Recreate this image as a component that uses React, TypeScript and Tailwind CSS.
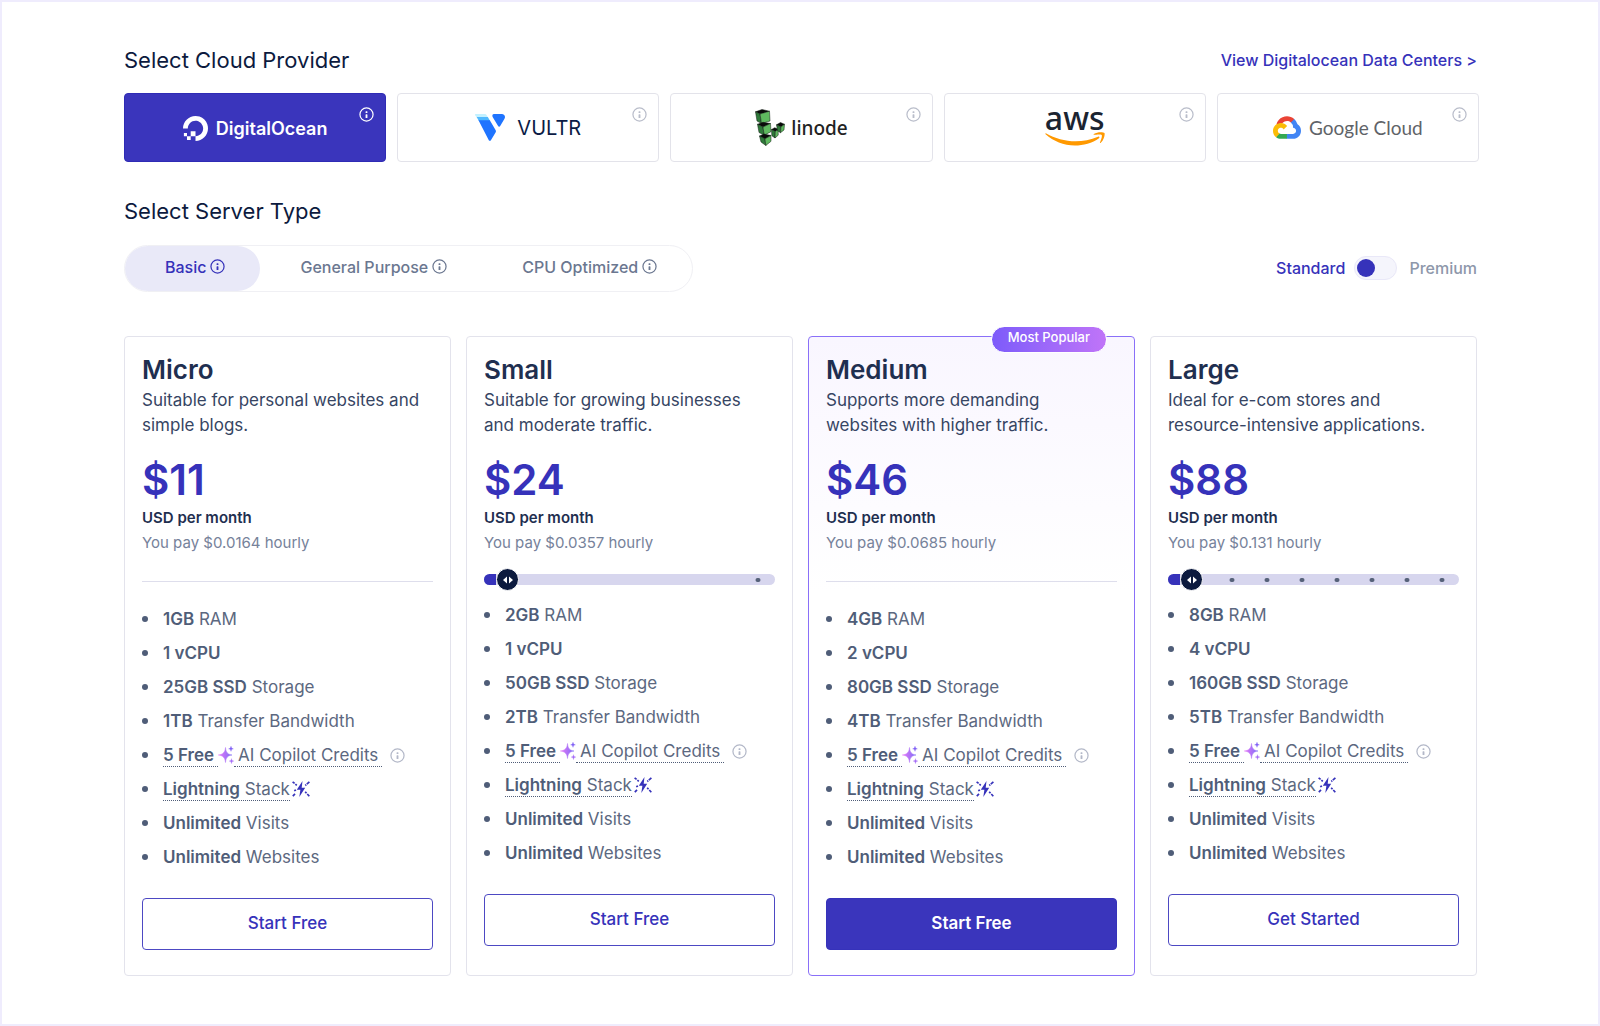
import React, { useState } from 'react';
import { SiDigitalocean } from 'react-icons/si';

type Plan = {
  name: string;
  description: string;
  price: string;
  hourly: string;
  ram: string;
  cpu: string;
  storage: string;
  transfer: string;
  cta: string;
  steps?: number[];
  popular?: boolean;
};

const plans: Plan[] = [
  {
    name: 'Micro',
    description: 'Suitable for personal websites and simple blogs.',
    price: '$11',
    hourly: '$0.0164',
    ram: '1GB',
    cpu: '1 vCPU',
    storage: '25GB SSD',
    transfer: '1TB',
    cta: 'Start Free',
  },
  {
    name: 'Small',
    description: 'Suitable for growing businesses and moderate traffic.',
    price: '$24',
    hourly: '$0.0357',
    ram: '2GB',
    cpu: '1 vCPU',
    storage: '50GB SSD',
    transfer: '2TB',
    cta: 'Start Free',
    steps: [94],
  },
  {
    name: 'Medium',
    description: 'Supports more demanding websites with higher traffic.',
    price: '$46',
    hourly: '$0.0685',
    ram: '4GB',
    cpu: '2 vCPU',
    storage: '80GB SSD',
    transfer: '4TB',
    cta: 'Start Free',
    popular: true,
  },
  {
    name: 'Large',
    description: 'Ideal for e-com stores and resource-intensive applications.',
    price: '$88',
    hourly: '$0.131',
    ram: '8GB',
    cpu: '4 vCPU',
    storage: '160GB SSD',
    transfer: '5TB',
    cta: 'Get Started',
    steps: [22, 34, 46, 58, 70, 82, 94],
  },
];

function InfoIcon({ className }: { className?: string }) {
  return (
    <svg viewBox="0 0 16 16" fill="none" className={`size-[15px] shrink-0 ${className ?? ''}`} aria-hidden="true">
      <circle cx="8" cy="8" r="7" stroke="currentColor" strokeWidth="1.3" />
      <rect x="7" y="4.5" width="2" height="2" rx="0.6" fill="currentColor" />
      <rect x="7" y="7.8" width="2" height="3.9" rx="0.6" fill="currentColor" />
    </svg>
  );
}

function DigitalOceanLogo() {
  return (
    <span className="flex items-center gap-2 pt-0.5 text-white">
      <SiDigitalocean className="size-[25px]" />
      <span className="text-[18px] leading-6 font-semibold">DigitalOcean</span>
    </span>
  );
}

function VultrLogo() {
  return (
    <span className="flex items-center gap-3 text-[#0b1b45]">
      <svg viewBox="0 0 30 27" className="h-[27px] w-[30px]" aria-hidden="true">
        <path d="M.8 0h9.200a1.800 1.800 0 0 1 1.500.9L13.400 4H2.400L.1 1.300A.9.9 0 0 1 .8 0z" fill="#c3f1ff" />
        <path d="M1.600 3h11.200l2.400 4H3.900z" fill="#51b9ff" />
        <path d="M3.500 6.300h11.300l5.900 9.900a2 2 0 0 1 0 2l-4.800 8a1.200 1.200 0 0 1-2.100 0z" fill="#1f74ff" />
        <path d="M18.800 0h8c2.600 0 4 2.600 2.700 4.700l-4.300 7.400a1.200 1.200 0 0 1-2.100 0L17.800 3.200C16.900 1.700 17.500 0 18.800 0z" fill="#1f74ff" />
      </svg>
      <span className="text-xl leading-6">VULTR</span>
    </span>
  );
}

function LinodeLogo() {
  return (
    <span className="flex items-center gap-1.5 text-[#222222]">
      <svg viewBox="0 0 30 37" className="h-[37px] w-[30px]" aria-hidden="true">
        <g stroke="#0f1a10" strokeWidth="0.5" strokeLinejoin="round">
          <path d="M0.500 2.800 7 0.500l7.500 1.700L5 5z" fill="#0a0a0a" />
          <path d="M0.500 2.800 5 5l1.500 9.500L2 12z" fill="#2f7a3a" />
          <path d="M5 5l9.500-2.800.5 9.800-8.500 2.500z" fill="#5fb95f" />
          <path d="M2.500 15.300 8 13.300l7.500 1.200L8 18z" fill="#0a0a0a" />
          <path d="M2.500 15.300 8 18l1.200 8.200L4 23.500z" fill="#2f7a3a" />
          <path d="M8 18l7.500-3.500.5 8.200-6.800 3.500z" fill="#5fb95f" />
          <path d="M4.500 27 9 25l7 1.500L10 29.800z" fill="#0a0a0a" />
          <path d="M4.500 27l5.500 2.800.8 6.700L6 33z" fill="#2f7a3a" />
          <path d="M10 29.800l6-3.300v5.800l-5.200 4.200z" fill="#5fb95f" />
          <path d="M16.500 20.500l3.200-1.800 3.500 1.600-2.900 2.200z" fill="#0a0a0a" />
          <path d="M16.500 20.500l3.800 2-.3 6.500-3.200-2.300z" fill="#2f7a3a" />
          <path d="M20.300 22.500l2.900-2.200v5.900L20 29z" fill="#5fb95f" />
          <path d="M21.500 15.800l4-2.300 4 1.800-3.500 2.500z" fill="#0a0a0a" />
          <path d="M21.500 15.800l4.500 2-.5 5.900-3-2z" fill="#2f7a3a" />
          <path d="M26 17.800l3.500-2.500-.5 5.700-3.500 2.700z" fill="#5fb95f" />
        </g>
      </svg>
      <span className="font-['Noto_Sans',sans-serif] text-[19px] leading-6 font-medium">linode</span>
    </span>
  );
}

function AwsLogo() {
  return (
    <span className="flex flex-col items-center pb-1.5 text-[#1b2431]">
      <span className="font-['Noto_Sans',sans-serif] text-[32px] leading-7 font-medium">aws</span>
      <svg viewBox="0 114 304 68" className="h-[14px] w-[60px]" fill="#ff9900" aria-hidden="true">
        <path d="M273.5 143.700c-32.900 24.300-80.700 37.200-121.800 37.200-57.600 0-109.500-21.300-148.700-56.700-3.100-2.800-.3-6.600 3.400-4.400 42.400 24.600 94.700 39.500 148.800 39.500 36.500 0 76.600-7.600 113.500-23.200 5.500-2.500 10.200 3.600 4.800 7.600z" />
        <path d="M287.200 128.100c-4.200-5.400-27.800-2.600-38.500-1.300-3.200.4-3.700-2.400-.8-4.500 18.800-13.200 49.700-9.400 53.300-5 3.600 4.500-1 35.400-18.600 50.200-2.700 2.300-5.300 1.100-4.100-1.900 4-9.900 12.900-32.200 8.700-37.500z" />
      </svg>
    </span>
  );
}

function GoogleCloudLogo() {
  return (
    <span className="flex items-center gap-2 text-[#5f6368]">
      <svg viewBox="0 0 256 206" className="h-[23px] w-[28px]" aria-hidden="true">
        <path fill="#ea4335" d="M170.252 56.819l22.253-22.253 1.483-9.370C153.437-11.677 88.976-7.496 52.420 33.920 42.267 45.423 34.734 59.764 30.717 74.573l7.970-1.123 44.505-7.340 3.436-3.513c19.797-21.742 53.270-24.667 76.128-6.168z" />
        <path fill="#4285f4" d="M224.205 73.918a100.249 100.249 0 0 0-30.217-48.722l-31.232 31.232a55.515 55.515 0 0 1 20.379 44.037v5.544c15.350 0 27.797 12.445 27.797 27.796 0 15.352-12.446 27.485-27.797 27.485h-55.671l-5.466 5.934v33.340l5.466 5.231h55.670c39.930.311 72.553-31.494 72.864-71.424a72.303 72.303 0 0 0-31.793-60.453" />
        <path fill="#34a853" d="M71.870 205.796h55.593V161.290H71.870a27.275 27.275 0 0 1-11.400-2.498l-7.887 2.420-22.409 22.253-1.952 7.574c12.567 9.489 27.900 14.825 43.647 14.757" />
        <path fill="#fbbc05" d="M71.870 61.425C31.940 61.664-.237 94.228.002 134.158a72.301 72.301 0 0 0 28.222 56.880l32.248-32.246c-13.990-6.322-20.208-22.786-13.887-36.776 6.320-13.990 22.786-20.208 36.775-13.888a27.796 27.796 0 0 1 13.887 13.888l32.248-32.248A72.224 72.224 0 0 0 71.870 61.425" />
      </svg>
      <span className="font-['Lato',sans-serif] text-[19px] leading-6">Google Cloud</span>
    </span>
  );
}

const providers = [
  { id: 'do', label: 'DigitalOcean', Logo: DigitalOceanLogo },
  { id: 'vultr', label: 'Vultr', Logo: VultrLogo },
  { id: 'linode', label: 'Linode', Logo: LinodeLogo },
  { id: 'aws', label: 'AWS', Logo: AwsLogo },
  { id: 'gcp', label: 'Google Cloud', Logo: GoogleCloudLogo },
];

const serverTypes = ['Basic', 'General Purpose', 'CPU Optimized'];

function SparkleIcon() {
  return (
    <svg viewBox="0 0 16 18" className="h-[18px] w-4 shrink-0" aria-hidden="true">
      <defs>
        <linearGradient id="sparkle" x1="0" y1="0" x2="1" y2="0">
          <stop offset="0" stopColor="#e879f9" />
          <stop offset="1" stopColor="#7c6cf5" />
        </linearGradient>
      </defs>
      <path d="M7.500 1.500c.5 5 2 6.800 6.500 7.500-4.500.7-6 2.500-6.500 7.500C7 11.500 5 9.700.3 9 5 8.300 7 6.500 7.500 1.500z" fill="url(#sparkle)" stroke="url(#sparkle)" strokeWidth="0.5" />
      <path d="M13 .3c.2 1.600.7 2.200 2.300 2.500-1.600.3-2.100.9-2.300 2.500-.2-1.600-.7-2.200-2.300-2.500C12.300 2.500 12.800 1.900 13 .3z" fill="#7c5cf6" stroke="#7c5cf6" strokeWidth="0.4" />
      <path d="M13.500 12.700c.2 1.500.7 2.100 2.200 2.400-1.500.3-2 .9-2.200 2.400-.2-1.500-.7-2.100-2.200-2.400 1.500-.3 2-.9 2.200-2.400z" fill="#a56bf7" stroke="#a56bf7" strokeWidth="0.4" />
    </svg>
  );
}

function LightningIcon() {
  return (
    <svg viewBox="0 0 18 16" className="ml-0.5 h-4 w-[18px] shrink-0" aria-hidden="true">
      <path d="M10.500 0 4.800 8.800h3.600L7.300 16l5.900-9.300H9.700z" fill="#3632ba" />
      <g stroke="#3632ba" strokeWidth="1.700">
        <path d="M.6.8l2 1.600M3.400 3.200l1.400 1.200M17.400.8l-2.600 2.300M14.200 3.700l-.9.800M.8 15.200l2.200-2.300M2.200 9.800l1.800-.9M17.300 15.200l-2-2.200M14.500 12.200l-1.300-1.500" />
      </g>
    </svg>
  );
}

function PlanSlider({ name, steps }: { name: string; steps: number[] }) {
  return (
    <div className="relative flex h-[21px] items-center">
      <div className="h-[11px] w-full overflow-hidden rounded-full bg-[#d7d6ee]">
        <div className="h-full w-3 bg-[#3632ba]" />
      </div>
      {steps.map((step) => (
        <span key={step} className="absolute h-1 w-[5px] -translate-x-1/2 rounded-full bg-[#566179]" style={{ left: `${step}%` }} />
      ))}
      <span className="absolute left-3 flex size-[23px] items-center justify-center rounded-full border border-white bg-[#0c1a3e]">
        <svg viewBox="0 0 12 8" className="h-2 w-3" fill="#fff" aria-hidden="true">
          <path d="M5 .5v7L1 4zM7 .5v7L11 4z" />
        </svg>
      </span>
      <input
        type="range"
        min={0}
        max={steps.length}
        defaultValue={0}
        aria-label={`${name} plan size`}
        className="absolute inset-0 w-full cursor-pointer opacity-0"
      />
    </div>
  );
}

function Feature({ children }: { children: React.ReactNode }) {
  return (
    <li className="flex min-h-[26px] items-center gap-[15px]">
      <span className="size-1.5 shrink-0 rounded-full bg-[#4f5d78]" />
      <span className="flex items-center whitespace-pre">{children}</span>
    </li>
  );
}

function PlanCard({ plan }: { plan: Plan }) {
  return (
    <article
      className={`relative rounded border px-[17px] pt-[19px] pb-[25px] ${
        plan.popular ? 'border-[#8a70f8] bg-linear-to-b from-[#f9f6ff] to-white to-40%' : 'border-[#e3e3ec]'
      }`}
    >
      {plan.popular && (
        <span className="absolute -top-[11px] right-[27px] rounded-full border border-white bg-linear-to-r from-[#7d5bfa] to-[#c074f8] px-4 pb-1 text-[13px] leading-[21px] font-medium text-white">
          Most Popular
        </span>
      )}
      <h3 className="text-[26px] leading-7 font-semibold text-[#1f2f50]">{plan.name}</h3>
      <p className="mt-1 h-[50px] pr-2.5 text-[17px] leading-[25px] text-[#364563]">{plan.description}</p>
      <p className="mt-5 text-[42px] leading-[44px] font-semibold text-[#3632ba]">{plan.price}</p>
      <p className="mt-1 text-[15px] leading-6 font-semibold text-[#1f2f50]">USD per month</p>
      <p className="mt-px text-[15px] leading-6 text-[#76829a]">You pay {plan.hourly} hourly</p>

      {plan.steps ? (
        <div className="mt-[14px] mb-3">
          <PlanSlider name={plan.name} steps={plan.steps} />
        </div>
      ) : (
        <hr className="mt-[26px] mb-6 border-[#dedeec]" />
      )}

      <ul className="flex flex-col gap-2 text-[17px] leading-[26px] text-[#5c6880] [&_strong]:font-semibold [&_strong]:text-[#4f5d78]">
        <Feature>
          <strong>{plan.ram}</strong> RAM
        </Feature>
        <Feature>
          <strong>{plan.cpu}</strong>
        </Feature>
        <Feature>
          <strong>{plan.storage}</strong> Storage
        </Feature>
        <Feature>
          <strong>{plan.transfer}</strong> Transfer Bandwidth
        </Feature>
        <Feature>
          <strong className="border-b border-dotted border-[#4f5d78] pr-1 leading-[22px]">5 Free</strong>
          <SparkleIcon />
          <span className="border-b border-dotted border-[#4f5d78] px-1 leading-[22px]">AI Copilot Credits</span>
          <InfoIcon className="ml-2 text-[#b3b8c8]" />
        </Feature>
        <Feature>
          <span className="border-b border-dotted border-[#4f5d78] leading-[22px]">
            <strong>Lightning</strong> Stack
          </span>
          <LightningIcon />
        </Feature>
        <Feature>
          <strong>Unlimited</strong> Visits
        </Feature>
        <Feature>
          <strong>Unlimited</strong> Websites
        </Feature>
      </ul>

      <button
        type="button"
        className={`mt-7 h-[52px] w-full rounded-sm border text-[17px] font-medium ${
          plan.popular ? 'border-[#3632ba] bg-[#3a35bc] font-semibold text-white' : 'border-[#4d49c3] bg-white text-[#3632ba]'
        }`}
      >
        {plan.cta}
      </button>
    </article>
  );
}

export default function App() {
  const [provider, setProvider] = useState('do');
  const [serverType, setServerType] = useState('Basic');
  const [premium, setPremium] = useState(false);

  return (
    <main className="min-h-screen border-2 border-[#efecfd] bg-white pt-[43px] pr-[119px] pb-12 pl-[122px] font-['Inter',sans-serif]">
      <header className="flex items-center justify-between pr-0.5">
        <h2 className="text-[22px] leading-[30px] text-[#0c1a3e]">Select Cloud Provider</h2>
        <a href="#data-centers" className="text-base leading-6 font-medium text-[#3632ba]">
          View Digitalocean Data Centers &gt;
        </a>
      </header>

      <div className="mt-[18px] grid grid-cols-5 gap-[11px]">
        {providers.map(({ id, label, Logo }) => (
          <button
            key={id}
            type="button"
            aria-label={label}
            aria-pressed={provider === id}
            onClick={() => setProvider(id)}
            className={`relative flex h-[69px] items-center justify-center rounded border ${
              provider === id ? 'border-[#2f2bb5] bg-[#3a35bc]' : 'border-[#e3e3ea] bg-white'
            }`}
          >
            <Logo />
            <InfoIcon className={`absolute top-[13px] right-[11px] ${provider === id ? 'text-white' : 'text-[#b9bdca]'}`} />
          </button>
        ))}
      </div>

      <h2 className="mt-[34px] text-[22px] leading-[30px] text-[#0c1a3e]">Select Server Type</h2>

      <div className="mt-[19px] flex items-center justify-between pr-0.5">
        <div className="flex h-[47px] rounded-full border border-[#f0f0f4]">
          {serverTypes.map((type) => (
            <button
              key={type}
              type="button"
              onClick={() => setServerType(type)}
              className={`flex items-center gap-1 rounded-full pr-[35px] pb-1 pl-10 text-base font-medium ${
                serverType === type ? 'bg-[#e9e9f8] text-[#3632ba]' : 'text-[#6b7790]'
              }`}
            >
              {type}
              <InfoIcon />
            </button>
          ))}
        </div>

        <label className="flex items-center pb-0.5 text-base font-medium text-[#8e97aa]">
          <span className="text-[#3632ba]">Standard</span>
          <input
            type="checkbox"
            role="switch"
            aria-label="Premium servers"
            checked={premium}
            onChange={(e) => setPremium(e.target.checked)}
            className="mr-3 ml-[9px] h-6 w-[43px] appearance-none rounded-full border border-[#e9e8f8] bg-[#f5f5fc] before:mt-0.5 before:ml-0.5 before:block before:size-[18px] before:rounded-full before:bg-[#3632ba] checked:before:ml-[21px]"
          />
          <span>Premium</span>
        </label>
      </div>

      <section className="mt-11 grid grid-cols-4 gap-[15px] pr-0.5">
        {plans.map((plan) => (
          <PlanCard key={plan.name} plan={plan} />
        ))}
      </section>
    </main>
  );
}
